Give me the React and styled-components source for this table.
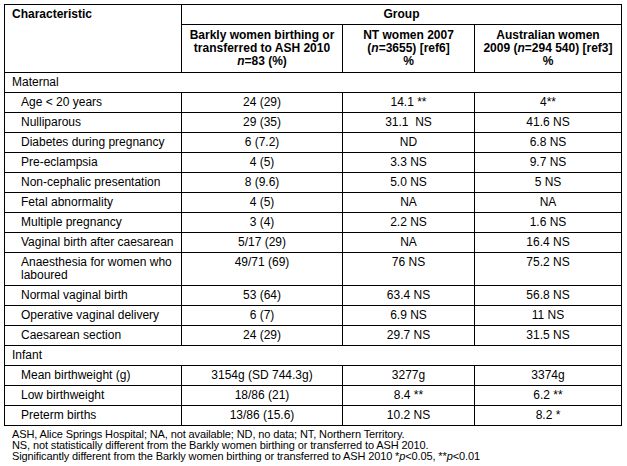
import React from "react";
import styled, { createGlobalStyle } from "styled-components";

const Global = createGlobalStyle`
  body {
    margin: 0;
    background: #fff;
    font-family: "Liberation Sans", Arial, sans-serif;
    color: #000;
  }
`;

const Page = styled.div`
  padding: 4px 0 0 4px;
  width: 627px;
  box-sizing: border-box;
`;

const Table = styled.table`
  border-collapse: collapse;
  width: 617px;
  table-layout: fixed;
  font-size: 12px;
  line-height: 13px;
`;

const Th = styled.th`
  border: 1px solid #000;
  font-weight: bold;
  text-align: ${(p) => (p.left ? "left" : "center")};
  vertical-align: top;
  padding: ${(p) => (p.sub ? "4px 3px 4px" : "3px 7px")};
`;

const Td = styled.td`
  border: 1px solid #000;
  vertical-align: top;
  padding: 3px 4px;
  text-align: ${(p) => (p.label ? "left" : "center")};
  padding-left: ${(p) => (p.label ? "16px" : "4px")};
  white-space: pre-wrap;
`;

const Section = styled.td`
  border: 1px solid #000;
  padding: 3px 7px;
  text-align: left;
`;

const Notes = styled.div`
  padding: 3px 0 0 8px;
  font-size: 11px;
  line-height: 11px;
  letter-spacing: -0.12px;
`;

const maternal = [
  ["Age < 20 years", "24 (29)", "14.1 **", "4**"],
  ["Nulliparous", "29 (35)", "31.1  NS", "41.6 NS"],
  ["Diabetes during pregnancy", "6 (7.2)", "ND", "6.8 NS"],
  ["Pre-eclampsia", "4 (5)", "3.3 NS", "9.7 NS"],
  ["Non-cephalic presentation", "8 (9.6)", "5.0 NS", "5 NS"],
  ["Fetal abnormality", "4 (5)", "NA", "NA"],
  ["Multiple pregnancy", "3 (4)", "2.2 NS", "1.6 NS"],
  ["Vaginal birth after caesarean", "5/17 (29)", "NA", "16.4 NS"],
  ["Anaesthesia for women who laboured", "49/71 (69)", "76 NS", "75.2 NS"],
  ["Normal vaginal birth", "53 (64)", "63.4 NS", "56.8 NS"],
  ["Operative vaginal delivery", "6 (7)", "6.9 NS", "11 NS"],
  ["Caesarean section", "24 (29)", "29.7 NS", "31.5 NS"],
];

const infant = [
  ["Mean birthweight (g)", "3154g (SD 744.3g)", "3277g", "3374g"],
  ["Low birthweight", "18/86 (21)", "8.4 **", "6.2 **"],
  ["Preterm births", "13/86 (15.6)", "10.2 NS", "8.2 *"],
];

function Rows({ data }) {
  return data.map((r) => (
    <tr key={r[0]}>
      <Td label>{r[0]}</Td>
      <Td>{r[1]}</Td>
      <Td>{r[2]}</Td>
      <Td>{r[3]}</Td>
    </tr>
  ));
}

export default function App() {
  return (
    <Page>
      <Global />
      <Table>
        <colgroup>
          <col style={{ width: 177 }} />
          <col style={{ width: 161 }} />
          <col style={{ width: 132 }} />
          <col style={{ width: 147 }} />
        </colgroup>
        <thead>
          <tr>
            <Th left rowSpan={2}>Characteristic</Th>
            <Th colSpan={3}>Group</Th>
          </tr>
          <tr>
            <Th sub>
              Barkly women birthing or transferred to ASH 2010
              <br />
              <i>n</i>=83 (%)
            </Th>
            <Th sub>
              NT women 2007
              <br />(<i>n</i>=3655) [ref6]
              <br />%
            </Th>
            <Th sub>
              Australian women
              <br />
              2009 (<i>n</i>=294 540) [ref3]
              <br />%
            </Th>
          </tr>
        </thead>
        <tbody>
          <tr>
            <Section colSpan={4}>Maternal</Section>
          </tr>
          <Rows data={maternal} />
          <tr>
            <Section colSpan={4}>Infant</Section>
          </tr>
          <Rows data={infant} />
        </tbody>
      </Table>
      <Notes>
        ASH, Alice Springs Hospital; NA, not available; ND, no data; NT, Northern Territory.
        <br />
        NS, not statistically different from the Barkly women birthing or transferred to ASH 2010.
        <br />
        Significantly different from the Barkly women birthing or transferred to ASH 2010 *<i>p</i>&lt;0.05, **<i>p</i>&lt;0.01
      </Notes>
    </Page>
  );
}
